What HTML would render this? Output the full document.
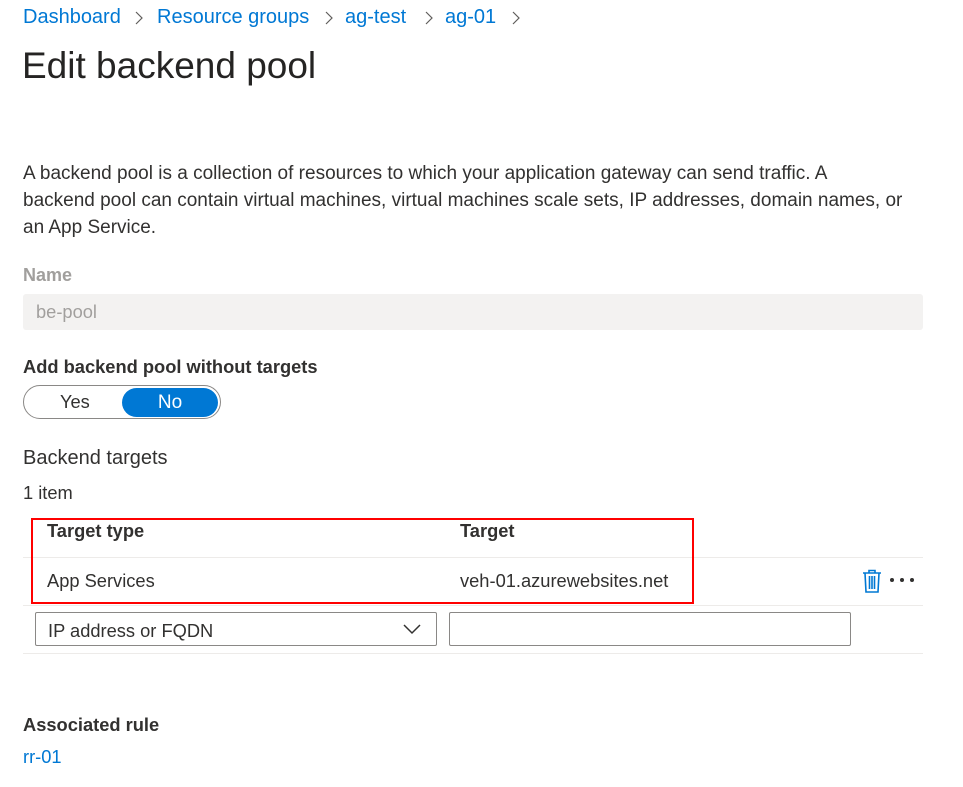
<!DOCTYPE html>
<html><head><meta charset="utf-8"><style>
body{margin:0;width:963px;height:787px;background:#fff;font-family:"Liberation Sans",sans-serif;color:#323130;position:relative;overflow:hidden}
.a{position:absolute;white-space:nowrap}
.bc{color:#0078d4;font-size:20px;top:6px}
.sep{top:11px}
</style></head><body>
<div class="a bc" style="left:23px">Dashboard</div>
<svg class="a sep" style="left:135px" width="8" height="14"><path d="M1 1l6 6-6 6" fill="none" stroke="#605e5c" stroke-width="1.2"/></svg>
<div class="a bc" style="left:157px">Resource groups</div>
<svg class="a sep" style="left:325px" width="8" height="14"><path d="M1 1l6 6-6 6" fill="none" stroke="#605e5c" stroke-width="1.2"/></svg>
<div class="a bc" style="left:345px">ag-test</div>
<svg class="a sep" style="left:425px" width="8" height="14"><path d="M1 1l6 6-6 6" fill="none" stroke="#605e5c" stroke-width="1.2"/></svg>
<div class="a bc" style="left:445px">ag-01</div>
<svg class="a sep" style="left:512px" width="8" height="14"><path d="M1 1l6 6-6 6" fill="none" stroke="#605e5c" stroke-width="1.2"/></svg>
<div class="a" style="left:22px;top:45px;font-size:37px;color:#252423">Edit backend pool</div>
<div class="a" style="left:23px;top:160px;font-size:19px;line-height:27px">A backend pool is a collection of resources to which your application gateway can send traffic. A<br>backend pool can contain virtual machines, virtual machines scale sets, IP addresses, domain names, or<br>an App Service.</div>
<div class="a" style="left:23px;top:265px;font-size:18px;font-weight:bold;color:#a19f9d">Name</div>
<div class="a" style="left:23px;top:294px;width:900px;height:36px;background:#f3f2f1;border-radius:3px"></div>
<div class="a" style="left:36px;top:301px;font-size:18.3px;color:#a19f9d">be-pool</div>
<div class="a" style="left:23px;top:356px;font-size:18.3px;font-weight:bold">Add backend pool without targets</div>
<div class="a" style="left:23px;top:385px;width:198px;height:34px;border:1px solid #8a8886;border-radius:17px;box-sizing:border-box"></div>
<div class="a" style="left:60px;top:391px;font-size:18.3px">Yes</div>
<div class="a" style="left:122px;top:388px;width:96px;height:29px;background:#0078d4;border-radius:15px;color:#fff;font-size:19px;text-align:center;line-height:29px">No</div>
<div class="a" style="left:23px;top:447px;font-size:20px">Backend targets</div>
<div class="a" style="left:23px;top:482px;font-size:18.3px">1 item</div>
<div class="a" style="left:23px;top:557px;width:900px;height:1px;background:#edebe9"></div>
<div class="a" style="left:23px;top:605px;width:900px;height:1px;background:#edebe9"></div>
<div class="a" style="left:23px;top:653px;width:900px;height:1px;background:#edebe9"></div>
<div class="a" style="left:47px;top:520px;font-size:18.3px;font-weight:bold">Target type</div>
<div class="a" style="left:460px;top:520px;font-size:18.3px;font-weight:bold">Target</div>
<div class="a" style="left:47px;top:570px;font-size:18.3px">App Services</div>
<div class="a" style="left:460px;top:570px;font-size:18.3px">veh-01.azurewebsites.net</div>
<div class="a" style="left:31px;top:518px;width:663px;height:86px;border:2px solid #f00;box-sizing:border-box"></div>
<svg class="a" style="left:862px;top:569px" width="20" height="24" viewBox="0 0 20 24"><path d="M1 4h18M7 4V1.5h6V4M3 4l1 19h12l1-19M7.5 7v13M10 7v13M12.5 7v13" fill="none" stroke="#0078d4" stroke-width="1.6"/></svg>
<svg class="a" style="left:889px;top:577px" width="28" height="6"><circle cx="3" cy="3" r="2" fill="#323130"/><circle cx="13" cy="3" r="2" fill="#323130"/><circle cx="23" cy="3" r="2" fill="#323130"/></svg>
<div class="a" style="left:35px;top:612px;width:402px;height:34px;border:1px solid #8a8886;border-radius:2px;box-sizing:border-box"></div>
<div class="a" style="left:48px;top:620px;font-size:18.3px">IP address or FQDN</div>
<svg class="a" style="left:403px;top:624px" width="18" height="11"><path d="M1 1l8 8 8-8" fill="none" stroke="#323130" stroke-width="1.5"/></svg>
<div class="a" style="left:449px;top:612px;width:402px;height:34px;border:1px solid #8a8886;border-radius:2px;box-sizing:border-box"></div>
<div class="a" style="left:23px;top:714px;font-size:18.3px;font-weight:bold">Associated rule</div>
<div class="a" style="left:23px;top:746px;font-size:18.3px;color:#0078d4">rr-01</div>
</body></html>
